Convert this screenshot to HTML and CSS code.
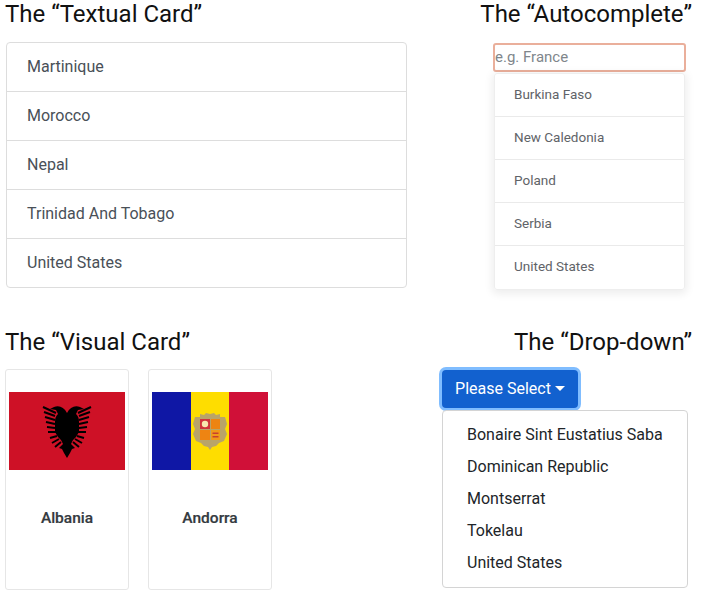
FILE: index.html
```html
<!DOCTYPE html>
<html lang="en">
<head>
    <meta charset="UTF-8">
    <title>Country Pickers</title>
    <link rel="stylesheet" href="styles.css">
</head>
<body>
    <div class="row row-top">
        <div class="col-textual">
            <h2>The “Textual Card”</h2>
            <div class="list-card">
                <div class="list-item">Martinique</div>
                <div class="list-item">Morocco</div>
                <div class="list-item">Nepal</div>
                <div class="list-item">Trinidad And Tobago</div>
                <div class="list-item">United States</div>
            </div>
        </div>
        <div class="col-auto">
            <h2>The “Autocomplete”</h2>
            <input class="auto-input" type="text" placeholder="e.g. France">
            <div class="auto-list">
                <div class="auto-item">Burkina Faso</div>
                <div class="auto-item">New Caledonia</div>
                <div class="auto-item">Poland</div>
                <div class="auto-item">Serbia</div>
                <div class="auto-item">United States</div>
            </div>
        </div>
    </div>

    <div class="row row-bottom">
        <div class="col-visual">
            <h2>The “Visual Card”</h2>
            <div class="cards">
                <div class="flag-card">
                    <svg class="flag" viewBox="0 0 116 78">
                        <rect width="116" height="78" fill="#ce1126"/>
                        <g id="eagle-half">
                            <path d="M58 21C55 15 50 13 45 15L41 17L47 18L49 22C47 24 46 26 46 30L46 40L49 45L52 48L54 52L50 56L53 57L55 61L58 66Z" fill="#000"/>
                            <path d="M47 21L34 15M46 24L35 20M46 28L36 25M46 32L37 30M46 36L38 35M47 40L39 40M48 44L41 46M50 47L43 51M52 50L46 55" stroke="#000" stroke-width="2" fill="none"/>
                        </g>
                        <use href="#eagle-half" transform="matrix(-1 0 0 1 116 0)"/>
                    </svg>
                    <div class="flag-name">Albania</div>
                </div>
                <div class="flag-card">
                    <svg class="flag" viewBox="0 0 116 78">
                        <rect width="39" height="78" fill="#0f17a5"/>
                        <rect x="39" width="38" height="78" fill="#fedd00"/>
                        <rect x="77" width="39" height="78" fill="#d01038"/>
                        <path d="M43 25L48 25L48 22L52 23L54 21L58 22L62 21L64 23L68 22L68 25L73 25L75 32L73 37L75 42L72 49L67 51L64 54L60 55L58 58L56 55L52 54L49 51L44 49L41 42L43 37L41 32Z" fill="#b9a468"/>
                        <rect x="48" y="27" width="10" height="10" fill="#d0343c"/>
                        <circle cx="53" cy="32" r="3.200" fill="#f8e8b0"/>
                        <rect x="59" y="27" width="9" height="10" fill="#ee8412"/>
                        <rect x="48" y="38" width="10" height="10" fill="#ee8412"/>
                        <rect x="59" y="38" width="9" height="10" fill="#f09a18"/>
                        <path d="M60.500 40.500h6v1.500h-6zM60.500 44h6v1.500h-6z" fill="#c8402e"/>
                    </svg>
                    <div class="flag-name">Andorra</div>
                </div>
            </div>
        </div>
        <div class="col-drop">
            <h2>The “Drop-down”</h2>
            <button class="drop-btn">Please Select<span class="caret"></span></button>
            <div class="drop-menu">
                <div class="drop-item">Bonaire Sint Eustatius Saba</div>
                <div class="drop-item">Dominican Republic</div>
                <div class="drop-item">Montserrat</div>
                <div class="drop-item">Tokelau</div>
                <div class="drop-item">United States</div>
            </div>
        </div>
    </div>
</body>
</html>
```

FILE: styles.css
```css
body {
    font-family: Roboto, Arial, sans-serif;
    margin: 0;
    padding: 0;
    background: #fff;
    color: #212529;
}

h2 {
    font-size: 24px;
    font-weight: 400;
    line-height: 29px;
    margin: 0;
    color: #111;
    white-space: nowrap;
}

.row {
    display: flex;
    justify-content: space-between;
    padding: 0 9px 0 5px;
}

.row-top {
    height: 328px;
}

/* Textual card */
.col-textual {
    width: 402px;
}

.list-card {
    margin: 13px 0 0 1px;
    border: 1px solid #ddd;
    border-radius: 4px;
}

.list-item {
    height: 48px;
    line-height: 47px;
    padding-left: 20px;
    font-size: 16px;
    color: #495057;
    border-bottom: 1px solid #ddd;
}

.list-item:last-child {
    border-bottom: none;
}

/* Autocomplete */
.col-auto {
    display: flex;
    flex-direction: column;
    align-items: flex-end;
}

.auto-input {
    display: block;
    box-sizing: border-box;
    width: 193px;
    height: 29px;
    margin: 14px 6px 0 0;
    padding: 0 0 2px;
    border: 2px solid #eaaf9b;
    border-radius: 3px;
    font-family: inherit;
    font-size: 15px;
    outline: none;
}

.auto-input::placeholder {
    color: #80868b;
}

.auto-list {
    box-sizing: border-box;
    width: 191px;
    margin: 1px 7px 0 0;
    padding-bottom: 1px;
    border: 1px solid #eee;
    border-radius: 3px;
    box-shadow: 0 2px 8px 2px rgba(0, 0, 0, 0.07);
}

.auto-item {
    height: 42px;
    line-height: 40px;
    padding-left: 19px;
    font-size: 13.5px;
    color: #5f6368;
    border-bottom: 1px solid #eaeaea;
}

.auto-item:last-child {
    border-bottom: none;
}

/* Visual card */
.cards {
    display: flex;
    gap: 19px;
    margin-top: 12px;
}

.flag-card {
    box-sizing: border-box;
    width: 124px;
    height: 221px;
    padding: 22px 3px 0;
    border: 1px solid #e6e6e6;
    border-radius: 3px;
}

.flag {
    display: block;
    width: 116px;
    height: 78px;
    filter: blur(0.4px);
}

.flag-name {
    margin-top: 38px;
    line-height: 20px;
    text-align: center;
    font-size: 15.5px;
    font-weight: 500;
    -webkit-text-stroke: 0.2px #343a40;
    color: #343a40;
}

/* Drop-down */
.col-drop {
    width: 250px;
    display: flex;
    flex-direction: column;
    align-items: flex-end;
}

.drop-btn {
    align-self: flex-start;
    box-sizing: border-box;
    height: 38px;
    width: 136px;
    margin: 13px 0 0;
    padding: 0 0 2px;
    background-color: #1261cf;
    color: #fff;
    border: none;
    border-radius: 4px;
    box-shadow: 0 0 0 3px #80bdff;
    font-family: inherit;
    font-size: 16px;
}

.caret {
    display: inline-block;
    margin-left: 4px;
    vertical-align: 3px;
    border-top: 5px solid #fff;
    border-left: 5px solid transparent;
    border-right: 5px solid transparent;
}

.drop-menu {
    box-sizing: border-box;
    width: 246px;
    height: 178px;
    margin: 2px 4px 0 0;
    padding: 8px 0;
    border: 1px solid #d4d4d4;
    border-radius: 4px;
}

.drop-item {
    height: 32px;
    line-height: 32px;
    padding-left: 24px;
    font-size: 16px;
    color: #212529;
    white-space: nowrap;
}
```
